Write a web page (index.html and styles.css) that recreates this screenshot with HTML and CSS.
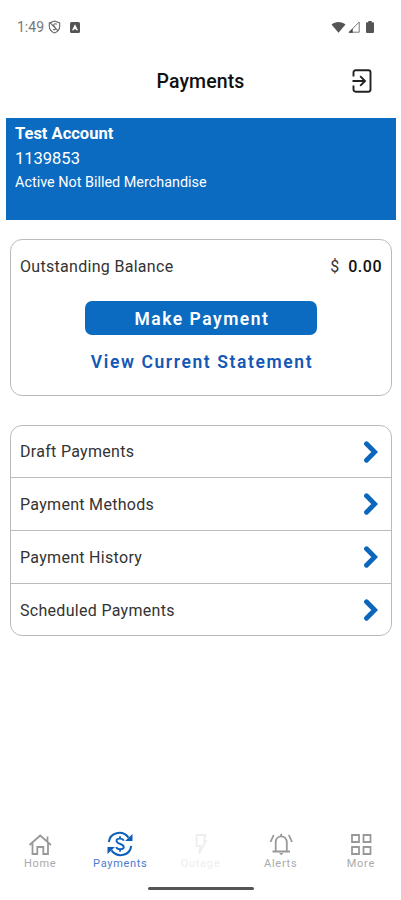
FILE: index.html
```html
<!DOCTYPE html>
<html lang="en">
<head>
    <meta charset="UTF-8">
    <meta name="viewport" content="width=device-width, initial-scale=1.0">
    <title>Payments</title>
    <link rel="stylesheet" href="styles.css">
</head>
<body>
    <div class="status-bar">
        <span class="time">1:49</span>
        <svg class="status-blocked" width="13" height="14" viewBox="0 0 13 14" fill="none" stroke="#666" stroke-width="1.1">
            <path d="M6.5 1 L11.7 3 V6.5 C11.5 9.5 9 12 6.5 13 C4 12 1.5 9.5 1.3 6.5 V3 Z"/>
            <path d="M2.3 2.8 L10 10.8 M8.8 4.2 C6.5 3 4.5 4.2 6.5 6.7 C8.7 8.6 7 10.3 5 9.5"/>
        </svg>
        <svg class="status-app" width="10" height="11" viewBox="0 0 10 11">
            <rect width="10" height="11" rx="1.5" fill="#555"/>
            <path d="M5 2.2 L8 8.2 H6.5 L5 6.8 L3.5 8.2 H2 Z" fill="#fff"/>
        </svg>
        <div class="status-right">
            <svg width="15" height="12" viewBox="0 0 15 12"><path d="M0.5 3.5 C4 0 11 0 14.5 3.5 L7.5 11.7 Z" fill="#555"/></svg>
            <svg width="12" height="12" viewBox="0 0 12 12"><path d="M1.2 11.2 H11.2 V1 Z" fill="none" stroke="#777"/><path d="M0.5 11.7 L4.7 7.5 V11.7 Z" fill="#444"/></svg>
            <svg width="8" height="12" viewBox="0 0 8 12"><path d="M2.3 0 H5.7 V1.3 H7 Q8 1.3 8 2.3 V11 Q8 12 7 12 H1 Q0 12 0 11 V2.3 Q0 1.3 1 1.3 H2.3 Z" fill="#555"/></svg>
        </div>
    </div>

    <header class="header">
        <h1>Payments</h1>
        <a href="#" class="logout" aria-label="Log out">
            <svg width="20" height="24" viewBox="0 0 20 24" fill="none" stroke="#222" stroke-width="1.9">
                <path d="M1.5 7.5 V3.5 Q1.5 1.3 3.7 1.3 H16.3 Q18.5 1.3 18.5 3.5 V20.5 Q18.5 22.7 16.3 22.7 H3.7 Q1.5 22.7 1.5 20.5 V16.5"/>
                <path d="M0.5 12 H13 M8.2 7.2 L13 12 L8.2 16.8"/>
            </svg>
        </a>
    </header>

    <div class="account">
        <div class="account-name">Test Account</div>
        <div class="account-number">1139853</div>
        <div class="account-status">Active Not Billed Merchandise</div>
    </div>

    <div class="card balance">
        <div class="balance-row">
            <span class="balance-label">Outstanding Balance</span>
            <span class="balance-amount">$ <b>0.00</b></span>
        </div>
        <button class="pay-button">Make Payment</button>
        <a href="#" class="statement-link">View Current Statement</a>
    </div>

    <div class="card menu">
        <a href="#" class="menu-item">Draft Payments
            <svg class="chevron" viewBox="0 0 14 22"><path d="M2.5 2.8 L10.7 11 L2.5 19.2"/></svg>
        </a>
        <a href="#" class="menu-item">Payment Methods
            <svg class="chevron" viewBox="0 0 14 22"><path d="M2.5 2.8 L10.7 11 L2.5 19.2"/></svg>
        </a>
        <a href="#" class="menu-item">Payment History
            <svg class="chevron" viewBox="0 0 14 22"><path d="M2.5 2.8 L10.7 11 L2.5 19.2"/></svg>
        </a>
        <a href="#" class="menu-item">Scheduled Payments
            <svg class="chevron" viewBox="0 0 14 22"><path d="M2.5 2.8 L10.7 11 L2.5 19.2"/></svg>
        </a>
    </div>

    <nav class="tabs">
        <a href="#" class="tab">
            <svg width="26" height="26" viewBox="0 0 26 26">
                <path d="M2.5 14 L13.2 4.5 L24 14 M5.5 12 V23 H10.3 V16 H16.3 V23 H21 V12 M20.5 11 V5.5"/>
            </svg>
            <span>Home</span>
        </a>
        <a href="#" class="tab active">
            <svg width="26" height="26" viewBox="0 0 26 26">
                <path d="M1.8 11 C3 1.5 15 -1.5 21.5 6.5 M24.2 15 C23 24.5 11 27.5 4.5 19.5"/>
                <path class="solid" d="M25.5 3 V10 H18 Z M0.5 23 V16 H8 Z"/>
                <path class="dollar" d="M16.7 9.8 C15.8 7 9.5 7 9.5 9.9 C9.5 13.2 16.8 12.5 16.8 16 C16.8 19 10 19 9.2 16 M13 5.3 V7.7 M13 18.2 V20.7"/>
            </svg>
            <span>Payments</span>
        </a>
        <a href="#" class="tab disabled">
            <svg width="26" height="26" viewBox="0 0 26 26">
                <path d="M9.5 4 H18.5 L17 10 H19 L12 22.5 L13.5 15 H9.5 Z"/>
            </svg>
            <span>Outage</span>
        </a>
        <a href="#" class="tab">
            <svg width="26" height="26" viewBox="0 0 26 26">
                <path d="M4.5 20.5 H22 M7.7 20.5 V11.5 C7.7 3.2 18.8 3.2 18.8 11.5 V20.5 M13.2 5.5 V2.8 M5.7 4 L2.5 11 M20.8 4 L24 11"/>
                <path class="clapper" d="M11 22 H15.5 L13.2 24.3 Z"/>
            </svg>
            <span>Alerts</span>
        </a>
        <a href="#" class="tab">
            <svg width="26" height="26" viewBox="0 0 26 26">
                <path d="M4 4 H11 V11 H4 Z M15.5 4 H22.5 V11 H15.5 Z M4 16 H11 V23 H4 Z M15.5 16 H22.5 V23 H15.5 Z"/>
            </svg>
            <span>More</span>
        </a>
    </nav>
    <div class="home-indicator"></div>
</body>
</html>
```
FILE: styles.css
```css
* {
    box-sizing: border-box;
}
body {
    margin: 0;
    height: 900px;
    display: flex;
    flex-direction: column;
    overflow: hidden;
    background-color: #fff;
    font-family: Roboto, sans-serif;
    color: #333;
}
a {
    color: inherit;
    text-decoration: none;
}
svg {
    display: block;
    flex: none;
}
.status-bar {
    display: flex;
    align-items: center;
    height: 54px;
    padding: 0 26px 0 17px;
}
.time {
    width: 31px;
    font-size: 14px;
    color: #777;
    white-space: nowrap;
}
.status-app {
    margin-left: 9px;
}
.status-right {
    display: flex;
    align-items: center;
    gap: 4px;
    margin-left: auto;
}
.status-right svg:first-child {
    margin-right: -2px;
}
.status-right svg:last-child {
    margin: 0 1px 0 2px;
}
.header {
    display: grid;
    grid-template-columns: 1fr auto 1fr;
    align-items: center;
    height: 54px;
    margin-bottom: 10px;
    padding: 0 28px;
}
.header h1 {
    grid-column: 2;
    margin: 0;
    padding-top: 2px;
    font-size: 19.5px;
    font-weight: 500;
    line-height: 24px;
    letter-spacing: 0.1px;
    color: #111;
}
.logout {
    justify-self: end;
    margin-right: 1px;
}
.account {
    height: 102px;
    margin: 0 5px 0 6px;
    padding: 3px 9px;
    background-color: #0b6bc1;
    color: #fff;
}
.account-name {
    font-size: 16.5px;
    font-weight: 700;
    line-height: 25px;
}
.account-number {
    font-size: 16.5px;
    line-height: 26px;
}
.account-status {
    font-size: 14.4px;
    line-height: 22px;
}
.card {
    margin: 0 9px 0 10px;
    border: 1px solid #bbb;
    border-radius: 12px;
}
.balance {
    display: flex;
    flex-direction: column;
    align-items: center;
    height: 157px;
    margin-top: 19px;
}
.balance-row {
    display: flex;
    justify-content: space-between;
    align-items: center;
    width: 100%;
    height: 52px;
    padding: 0 9px;
    font-size: 16px;
}
.balance-label {
    letter-spacing: 0.3px;
}
.balance-amount b {
    margin-left: 5px;
    font-weight: 500;
    letter-spacing: 0.5px;
    color: #111;
}
.pay-button {
    width: 232px;
    height: 34px;
    margin-top: 9px;
    padding: 2px 0 0;
    border: none;
    border-radius: 7px;
    background-color: #0b6bc1;
    color: #fff;
    font-family: inherit;
    font-size: 17.5px;
    font-weight: 600;
    letter-spacing: 1.5px;
    text-indent: 2px;
}
.statement-link {
    margin-top: 16px;
    font-size: 17.5px;
    font-weight: 600;
    line-height: 22px;
    letter-spacing: 1.6px;
    text-indent: 2px;
    color: #1458b5;
}
.menu {
    height: 211px;
    margin-top: 29px;
}
.menu-item {
    display: flex;
    justify-content: space-between;
    align-items: center;
    height: 53px;
    padding: 0 13px 0 9px;
    font-size: 16px;
    letter-spacing: 0.3px;
}
.menu-item:first-child {
    height: 51px;
}
.menu-item + .menu-item {
    border-top: 1px solid #bbb;
}
.chevron {
    width: 14px;
    height: 22px;
    fill: none;
    stroke: #0b66bc;
    stroke-width: 4.8;
    stroke-linecap: round;
}
.tabs {
    display: grid;
    grid-template-columns: repeat(5, 1fr);
    margin-top: auto;
}
.tab {
    display: flex;
    flex-direction: column;
    align-items: center;
    font-size: 11px;
    line-height: 14px;
    letter-spacing: 0.7px;
    color: #aaa;
}
.tab svg {
    fill: none;
    stroke: #999;
    stroke-width: 1.8;
}
.tab.active {
    color: #4a7cce;
}
.tab.active svg {
    stroke: #0d5fba;
    stroke-width: 2;
}
.tab .solid {
    fill: #0d5fba;
    stroke: none;
}
.tab .clapper {
    fill: #999;
    stroke: none;
}
.tab .dollar {
    stroke-width: 1.8;
}
.tab.disabled {
    color: #eee;
}
.tab.disabled svg {
    stroke: #eee;
}
.home-indicator {
    width: 106px;
    height: 3px;
    margin: 16px auto 10px;
    border-radius: 2px;
    background-color: #555;
}
```
